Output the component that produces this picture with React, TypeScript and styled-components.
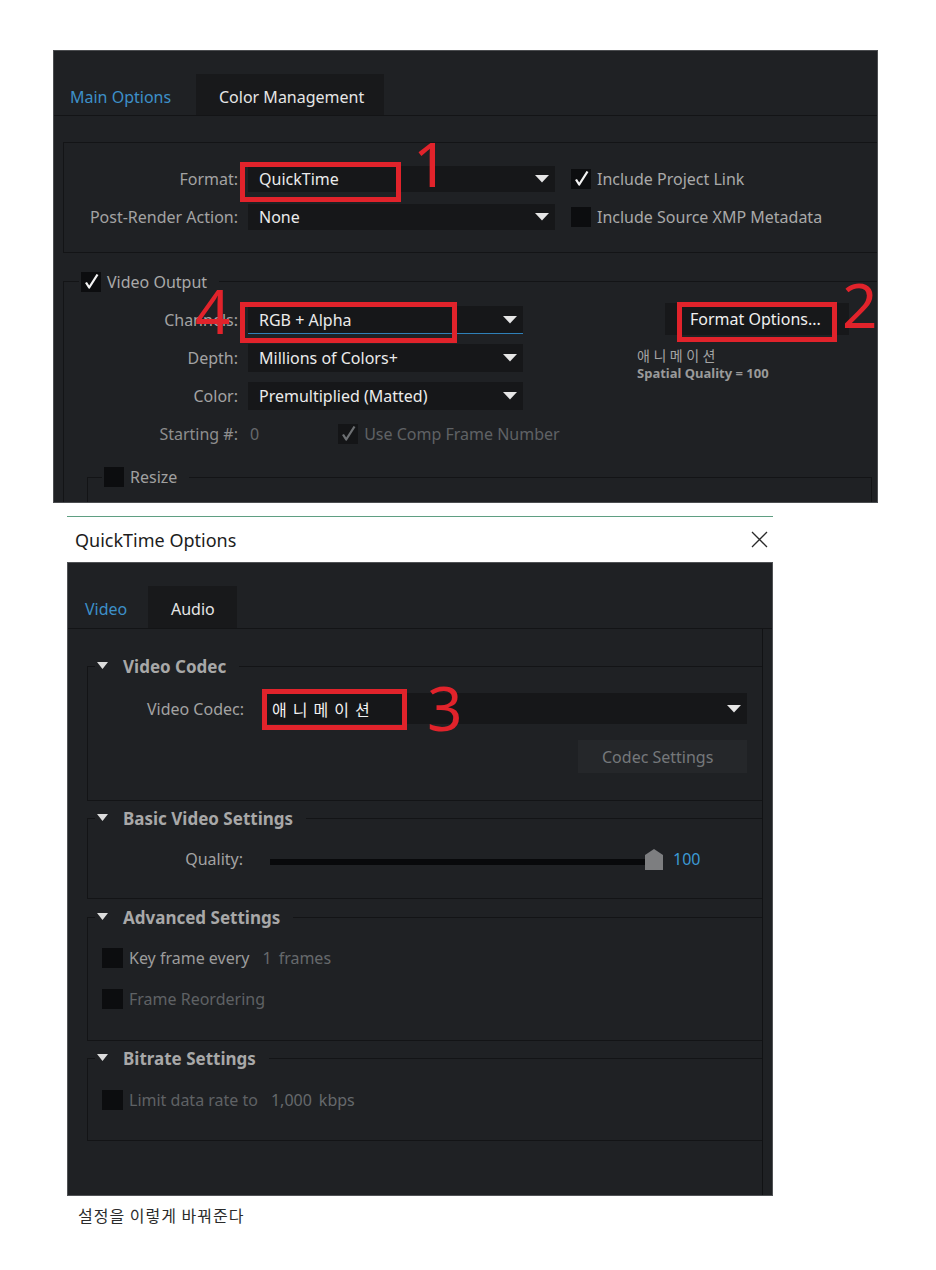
import React from "react";
import styled, { createGlobalStyle } from "styled-components";

const GlobalStyle = createGlobalStyle`
  html, body { margin: 0; padding: 0; background: #ffffff; }
  body { font-family: "Noto Sans", "Noto Sans CJK KR", sans-serif; }
  *, *::before, *::after { box-sizing: border-box; }
`;

const KR_FONT = `"Noto Sans CJK KR", "Noto Sans", sans-serif`;

const C = {
  bg: "#1f2124",
  field: "#161719",
  tabOff: "#18191b",
  line: "#131416",
  label: "#a3a3a3",
  value: "#ebebeb",
  dim: "#5f6265",
  blue: "#3d90c9",
  red: "#e1232b",
};

const Page = styled.div`
  width: 936px;
  min-height: 1270px;
  padding-top: 50px;
  display: flex;
  flex-direction: column;
  align-items: flex-start;
  background: #ffffff;
`;

/* ---------- shared dark UI parts ---------- */

const TabBar = styled.div<{ $top: number; $height: number }>`
  display: flex;
  flex: none;
  margin-top: ${(p) => p.$top}px;
  height: ${(p) => p.$height}px;
  border-bottom: 1px solid ${C.line};
`;

const Tab = styled.div<{ $active?: boolean; $width: number; $pad: number }>`
  display: flex;
  align-items: center;
  width: ${(p) => p.$width}px;
  padding: 4px 0 0 ${(p) => p.$pad}px;
  font-size: 16px;
  color: ${(p) => (p.$active ? C.blue : "#e6e6e6")};
  background: ${(p) => (p.$active ? "transparent" : C.tabOff)};
`;

const Row = styled.div<{ $h: number; $pl?: number }>`
  display: flex;
  align-items: center;
  height: ${(p) => p.$h}px;
  padding-left: ${(p) => p.$pl ?? 0}px;
  white-space: nowrap;
`;

const Label = styled.div<{ $w: number; $gap: number; $dim?: boolean }>`
  flex: none;
  width: ${(p) => p.$w}px;
  margin-right: ${(p) => p.$gap}px;
  text-align: right;
  color: ${(p) => (p.$dim ? "#8e8e8e" : C.label)};
`;

const Select = styled.div<{ $w: number; $h: number; $focus?: boolean; $pl?: number }>`
  flex: none;
  display: flex;
  align-items: center;
  justify-content: space-between;
  width: ${(p) => p.$w}px;
  height: ${(p) => p.$h}px;
  padding: 0 6px 0 ${(p) => p.$pl ?? 11}px;
  background: ${C.field};
  color: ${C.value};
  border-bottom: ${(p) => (p.$focus ? "1px solid #2f80b8" : "none")};
`;

const KrValue = styled.span`
  font-family: ${KR_FONT};
  font-size: 16px;
  letter-spacing: 6px;
  color: #f2f2f2;
`;

const Box = styled.span<{ $w?: number; $dim?: boolean }>`
  flex: none;
  display: inline-flex;
  align-items: center;
  justify-content: center;
  width: ${(p) => p.$w ?? 20}px;
  height: 20px;
  background: ${(p) => (p.$dim ? "#141517" : "#0c0d0f")};
`;

const CheckText = styled.span<{ $tone?: "on" | "mid" | "off" | "legend" }>`
  margin-left: 6px;
  color: ${(p) =>
    p.$tone === "off"
      ? C.dim
      : p.$tone === "mid"
      ? "#9c9c9c"
      : p.$tone === "legend"
      ? "#a0a0a0"
      : "#a9a9a9"};
`;

const Faint = styled.span<{ $ml: number }>`
  margin-left: ${(p) => p.$ml}px;
  color: #66696c;
`;

const Spacer = styled.div<{ $w?: number; $h?: number }>`
  flex: none;
  width: ${(p) => p.$w ?? 0}px;
  height: ${(p) => p.$h ?? 0}px;
`;

function Check({ checked, dim, w }: { checked?: boolean; dim?: boolean; w?: number }) {
  return (
    <Box $w={w} $dim={dim}>
      {checked && (
        <svg width="20" height="20" viewBox="0 0 20 20">
          <path
            d="M5 10.5 L8.2 15.5 L16.5 2.5"
            fill="none"
            stroke={dim ? "#6d7073" : "#f4f4f4"}
            strokeWidth="2.3"
            strokeLinejoin="round"
          />
        </svg>
      )}
    </Box>
  );
}

function Arrow() {
  return (
    <svg width="14" height="8" viewBox="0 0 14 8">
      <path d="M0 0 H14 L7 7.5 Z" fill="#e6e6e6" />
    </svg>
  );
}

/* fieldsets */

const Group = styled.fieldset<{ $mt: number; $ml?: number; $mr?: number; $closed?: boolean }>`
  margin: ${(p) => p.$mt}px ${(p) => p.$mr ?? 0}px 0 ${(p) => p.$ml ?? 0}px;
  padding: 0;
  min-width: 0;
  border: 1px solid ${C.line};
  border-right: ${(p) => (p.$closed ? `1px solid ${C.line}` : "none")};
`;

const Legend = styled.legend<{ $ml: number; $pr: number; $gap: number; $h: number }>`
  display: flex;
  align-items: center;
  gap: ${(p) => p.$gap}px;
  height: ${(p) => p.$h}px;
  margin-left: ${(p) => p.$ml}px;
  padding: 0 ${(p) => p.$pr}px 0 2px;
  color: #a9a9a9;
  white-space: nowrap;
`;

/* ---------- top: After Effects output module ---------- */

const AePanel = styled.div`
  position: relative;
  flex: none;
  margin-left: 53px;
  width: 825px;
  height: 453px;
  overflow: hidden;
  background: ${C.bg};
  border: 1px solid #4b4d50;
  font-size: 16px;
  color: ${C.value};
`;

const PanelBody = styled.div`
  padding: 26px 0 0 9px;
`;

const FlatBox = styled.div`
  display: flex;
  flex-direction: column;
  gap: 12px;
  padding: 23px 0 22px;
  border: 1px solid ${C.line};
  border-right: none;
`;

const OutputInner = styled.div`
  display: flex;
  align-items: flex-start;
  padding-top: 11px;
`;

const RowStack = styled.div<{ $gap: number; $pt?: number; $w?: number }>`
  flex: none;
  display: flex;
  flex-direction: column;
  gap: ${(p) => p.$gap}px;
  width: ${(p) => (p.$w ? `${p.$w}px` : "auto")};
  padding-top: ${(p) => p.$pt ?? 0}px;
`;

const SideColumn = styled.div`
  flex: none;
  display: flex;
  flex-direction: column;
  margin-left: 114px;
`;

const FormatButton = styled.div`
  display: flex;
  align-items: center;
  margin-left: 28px;
  width: 184px;
  height: 32px;
  padding-left: 25px;
  background: #17181a;
  color: #f0f0f0;
  white-space: nowrap;
`;

const CodecInfo = styled.div`
  margin-top: 10px;
  color: #a4a4a4;
`;

const CodecName = styled.div`
  font-family: ${KR_FONT};
  font-size: 14px;
  letter-spacing: 3.5px;
  line-height: 20px;
`;

const CodecDetail = styled.div`
  font-size: 13px;
  font-weight: 700;
  line-height: 16px;
  color: #9a9a9a;
  white-space: nowrap;
`;

const ResizeFill = styled.div`
  height: 60px;
`;

/* ---------- bottom: QuickTime Options dialog ---------- */

const Dialog = styled.div`
  flex: none;
  margin: 13px 0 0 67px;
  width: 706px;
`;

const TitleBar = styled.div`
  display: flex;
  align-items: center;
  justify-content: space-between;
  height: 46px;
  padding: 0 5px 0 8px;
  background: #ffffff;
  border-top: 1px solid #5f9f82;
  font-size: 18px;
  color: #1c1c1c;
`;

const DialogBody = styled.div`
  position: relative;
  display: flex;
  flex-direction: column;
  height: 634px;
  background: ${C.bg};
  border: 1px solid #505255;
  font-size: 16px;
  color: ${C.value};
`;

const BodyMain = styled.div`
  display: flex;
  flex: 1;
`;

const SectionList = styled.div`
  flex: 1;
  display: flex;
  flex-direction: column;
  padding: 26px 0 0 19px;
`;

const ScrollTrack = styled.div`
  flex: none;
  width: 10px;
  border-left: 1px solid #111214;
`;

const SectionTitle = styled.span`
  font-size: 17px;
  font-weight: 700;
  color: #a8a8a8;
`;

const SectionInner = styled.div<{ $pad: string; $gap?: number }>`
  display: flex;
  flex-direction: column;
  gap: ${(p) => p.$gap ?? 0}px;
  padding: ${(p) => p.$pad};
`;

const GhostButton = styled.div`
  align-self: flex-end;
  display: flex;
  align-items: center;
  width: 169px;
  height: 33px;
  padding-left: 24px;
  background: #25272a;
  color: #75787b;
`;

const Track = styled.div`
  align-self: flex-end;
  flex: none;
  width: 375px;
  height: 6px;
  margin-bottom: 5px;
  background: #08090b;
`;

const SliderValue = styled.span`
  margin-left: 10px;
  color: #3c9ad5;
`;

const Caption = styled.div`
  margin: 9px 0 0 78px;
  font-family: ${KR_FONT};
  font-size: 16px;
  letter-spacing: 1px;
  line-height: 20px;
  color: #2b2b2b;
`;

/* ---------- red annotations (overlay) ---------- */

const Mark = styled.div<{ $x: number; $y: number; $w: number; $h: number }>`
  position: absolute;
  left: ${(p) => p.$x}px;
  top: ${(p) => p.$y}px;
  width: ${(p) => p.$w}px;
  height: ${(p) => p.$h}px;
  border: 5px solid ${C.red};
  pointer-events: none;
`;

const MarkNum = styled.div<{ $x: number; $y: number }>`
  position: absolute;
  left: ${(p) => p.$x}px;
  top: ${(p) => p.$y}px;
  font-family: "Noto Sans", sans-serif;
  font-size: 62px;
  line-height: 46px;
  color: ${C.red};
  pointer-events: none;
`;

function Triangle() {
  return (
    <svg width="11" height="8" viewBox="0 0 11 8">
      <path d="M0 0 H11 L5.5 7 Z" fill="#dcdcdc" />
    </svg>
  );
}

function Thumb() {
  return (
    <svg width="18" height="21" viewBox="0 0 18 21">
      <path d="M0 6 L9 0 L18 6 V21 H0 Z" fill="#7d7e80" />
    </svg>
  );
}

function CloseIcon() {
  return (
    <svg width="17" height="17" viewBox="0 0 17 17">
      <path d="M1 1 L16 16 M16 1 L1 16" stroke="#2a2a2a" strokeWidth="1.3" />
    </svg>
  );
}

function SectionLegend({ title }: { title: string }) {
  return (
    <Legend $ml={7} $pr={13} $gap={15} $h={22}>
      <Triangle />
      <SectionTitle>{title}</SectionTitle>
    </Legend>
  );
}

export default function App() {
  return (
    <>
      <GlobalStyle />
      <Page>
        <AePanel>
          <TabBar $top={23} $height={42}>
            <Tab $active $width={142} $pad={16}>
              Main Options
            </Tab>
            <Tab $width={188} $pad={23}>
              Color Management
            </Tab>
          </TabBar>
          <PanelBody>
            <FlatBox>
              <Row $h={26}>
                <Label $w={174} $gap={10}>Format:</Label>
                <Select $w={307} $h={26}>
                  <span>QuickTime</span>
                  <Arrow />
                </Select>
                <Spacer $w={16} />
                <Check checked />
                <CheckText>Include Project Link</CheckText>
              </Row>
              <Row $h={26}>
                <Label $w={174} $gap={10}>Post-Render Action:</Label>
                <Select $w={307} $h={26}>
                  <span>None</span>
                  <Arrow />
                </Select>
                <Spacer $w={16} />
                <Check />
                <CheckText>Include Source XMP Metadata</CheckText>
              </Row>
            </FlatBox>

            <Group $mt={18}>
              <Legend $ml={15} $pr={12} $gap={6} $h={21}>
                <Check checked />
                <span>Video Output</span>
              </Legend>
              <OutputInner>
                <RowStack $gap={10} $pt={3} $w={459}>
                  <Row $h={28}>
                    <Label $w={174} $gap={10}>Channels:</Label>
                    <Select $w={275} $h={28} $focus>
                      <span>RGB + Alpha</span>
                      <Arrow />
                    </Select>
                  </Row>
                  <Row $h={28}>
                    <Label $w={174} $gap={10}>Depth:</Label>
                    <Select $w={275} $h={28}>
                      <span>Millions of Colors+</span>
                      <Arrow />
                    </Select>
                  </Row>
                  <Row $h={28}>
                    <Label $w={174} $gap={10}>Color:</Label>
                    <Select $w={275} $h={28}>
                      <span>Premultiplied (Matted)</span>
                      <Arrow />
                    </Select>
                  </Row>
                  <Row $h={28}>
                    <Label $w={174} $gap={12} $dim>
                      Starting #:
                    </Label>
                    <Faint $ml={0}>0</Faint>
                    <Spacer $w={79} />
                    <Check checked dim />
                    <CheckText $tone="off">Use Comp Frame Number</CheckText>
                  </Row>
                </RowStack>
                <SideColumn>
                  <FormatButton>Format Options...</FormatButton>
                  <CodecInfo>
                    <CodecName>애니메이션</CodecName>
                    <CodecDetail>Spatial Quality = 100</CodecDetail>
                  </CodecInfo>
                </SideColumn>
              </OutputInner>
              <Group $mt={19} $ml={23} $mr={5} $closed>
                <Legend $ml={14} $pr={12} $gap={0} $h={20}>
                  <Check />
                  <CheckText $tone="legend">Resize</CheckText>
                </Legend>
                <ResizeFill />
              </Group>
            </Group>
          </PanelBody>

          <Mark $x={186} $y={111} $w={161} $h={40} />
          <MarkNum $x={359} $y={89}>1</MarkNum>
          <Mark $x={623} $y={251} $w={160} $h={40} />
          <MarkNum $x={788} $y={230}>2</MarkNum>
          <Mark $x={186} $y={251} $w={217} $h={41} />
          <MarkNum $x={141} $y={236}>4</MarkNum>
        </AePanel>

        <Dialog>
          <TitleBar>
            <span>QuickTime Options</span>
            <CloseIcon />
          </TitleBar>
          <DialogBody>
            <TabBar $top={23} $height={43}>
              <Tab $active $width={80} $pad={17}>
                Video
              </Tab>
              <Tab $width={89} $pad={23}>
                Audio
              </Tab>
            </TabBar>
            <BodyMain>
              <SectionList>
                <Group $mt={0}>
                  <SectionLegend title="Video Codec" />
                  <SectionInner $pad="16px 15px 27px 0" $gap={16}>
                    <Row $h={31}>
                      <Label $w={156} $gap={21}>Video Codec:</Label>
                      <Select $w={482} $h={31} $pl={7}>
                        <KrValue>애니메이션</KrValue>
                        <Arrow />
                      </Select>
                    </Row>
                    <GhostButton>Codec Settings</GhostButton>
                  </SectionInner>
                </Group>

                <Group $mt={6}>
                  <SectionLegend title="Basic Video Settings" />
                  <SectionInner $pad="19px 0 28px 0">
                    <Row $h={22}>
                      <Label $w={155} $gap={27}>Quality:</Label>
                      <Track />
                      <Thumb />
                      <SliderValue>100</SliderValue>
                    </Row>
                  </SectionInner>
                </Group>

                <Group $mt={7}>
                  <SectionLegend title="Advanced Settings" />
                  <SectionInner $pad="20px 0 31px 0" $gap={21}>
                    <Row $h={20} $pl={14}>
                      <Check w={21} />
                      <CheckText $tone="mid">Key frame every</CheckText>
                      <Faint $ml={13}>1</Faint>
                      <Faint $ml={7}>frames</Faint>
                    </Row>
                    <Row $h={20} $pl={14}>
                      <Check w={21} />
                      <CheckText $tone="off">Frame Reordering</CheckText>
                    </Row>
                  </SectionInner>
                </Group>

                <Group $mt={6}>
                  <SectionLegend title="Bitrate Settings" />
                  <SectionInner $pad="21px 0 30px 0">
                    <Row $h={20} $pl={14}>
                      <Check w={21} />
                      <CheckText $tone="off">Limit data rate to</CheckText>
                      <Faint $ml={13}>1,000</Faint>
                      <Faint $ml={7}>kbps</Faint>
                    </Row>
                  </SectionInner>
                </Group>
              </SectionList>
              <ScrollTrack />
            </BodyMain>

            <Mark $x={194} $y={126} $w={145} $h={41} />
            <MarkNum $x={359} $y={121}>3</MarkNum>
          </DialogBody>
        </Dialog>

        <Caption>설정을 이렇게 바꿔준다</Caption>
      </Page>
    </>
  );
}
